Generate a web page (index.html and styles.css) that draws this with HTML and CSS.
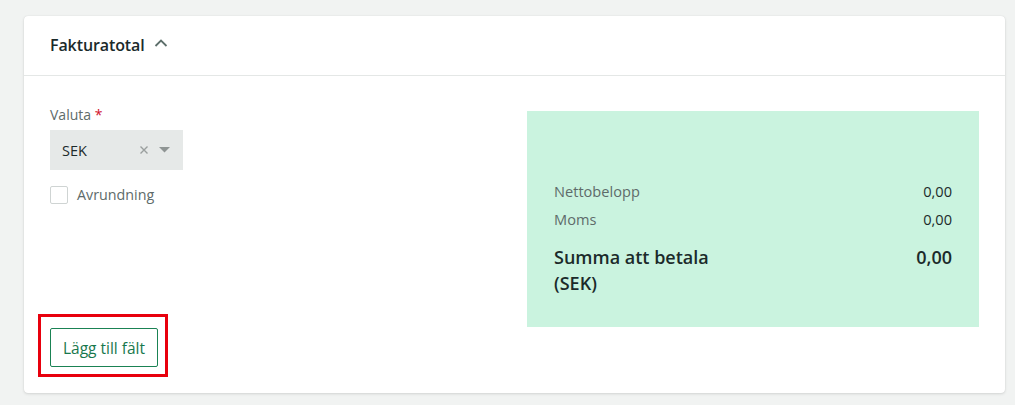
FILE: index.html
```html
<!DOCTYPE html>
<html lang="sv">
<head>
<meta charset="utf-8">
<link rel="stylesheet" href="styles.css">
</head>
<body>
<div class="card">
  <div class="card-header">
    <h2 class="title">Fakturatotal</h2>
    <svg class="chevron" width="14" height="10" viewBox="0 0 14 10"><path d="M1.5 8 L7 2.5 L12.5 8" fill="none" stroke="#5d6f6b" stroke-width="1.8"/></svg>
  </div>
  <div class="card-body">
    <div class="left">
      <div class="label">Valuta <span class="req">*</span></div>
      <div class="select">
        <span class="select-value">SEK</span>
        <span class="select-icons">
          <svg width="10" height="10" viewBox="0 0 10 10"><path d="M1.5 1.5 L8.5 8.5 M8.5 1.5 L1.5 8.5" stroke="#9a9f9e" stroke-width="1.4"/></svg>
          <svg width="11" height="6" viewBox="0 0 11 6"><path d="M0 0 H11 L5.5 5.5 Z" fill="#8f9594"/></svg>
        </span>
      </div>
      <label class="check">
        <span class="box"></span>
        <span class="check-text">Avrundning</span>
      </label>
      <div class="btn-wrap">
        <button class="btn">Lägg till fält</button>
      </div>
    </div>
    <div class="totals">
      <div class="row"><span class="k">Nettobelopp</span><span class="v">0,00</span></div>
      <div class="row"><span class="k">Moms</span><span class="v">0,00</span></div>
      <div class="row total"><span class="k">Summa att betala<br>(SEK)</span><span class="v">0,00</span></div>
    </div>
  </div>
</div>
</body>
</html>
```
FILE: styles.css
```css
* { box-sizing: border-box; }
html, body { margin: 0; height: 100%; }
body {
  background: #f1f3f2;
  font-family: "Open Sans", "Noto Sans", sans-serif;
  padding: 16px 10px 0 24px;
  color: #1d2b2b;
}
.card {
  width: 981px;
  height: 377px;
  background: #fff;
  border-radius: 4px;
  box-shadow: 0 1px 3px rgba(0,0,0,0.12), 0 0 1px rgba(0,0,0,0.12);
  display: flex;
  flex-direction: column;
}
.card-header {
  height: 60px;
  border-bottom: 1px solid #e4e7e6;
  display: flex;
  align-items: center;
  padding: 0 26px 2px 26px;
  gap: 9px;
}
.title {
  margin: 0;
  font-size: 16px;
  font-weight: 600;
  color: #1b2a2a;
  letter-spacing: -0.1px;
}
.chevron { margin-top: -3px; }
.card-body {
  flex: 1;
  display: flex;
  padding: 29px 26px 26px 26px;
}
.left {
  flex: 1;
  display: flex;
  flex-direction: column;
  align-items: flex-start;
}
.label {
  font-size: 14px;
  line-height: 20px;
  color: #5e6b6a;
}
.req { color: #d0102b; }
.select {
  margin-top: 5px;
  width: 133px;
  height: 40px;
  background: #e6e9e8;
  display: flex;
  align-items: center;
  justify-content: space-between;
  padding: 0 13px 0 12px;
}
.select-value { font-size: 14.5px; color: #1d2b2b; }
.select-icons { display: flex; align-items: center; gap: 10px; }
.check {
  margin-top: 16px;
  display: flex;
  align-items: center;
  gap: 9px;
}
.box {
  width: 18px;
  height: 18px;
  border: 1px solid #cfd4d3;
  border-radius: 2px;
  background: #fff;
}
.check-text { font-size: 14.3px; color: #5e6b6a; line-height: 18px; }
.btn-wrap {
  margin-top: auto;
  position: relative;
}
.btn-wrap::after {
  content: "";
  position: absolute;
  top: -14px; bottom: -10px; left: -12.5px; right: -10px;
  border: 3px solid #e8000d;
  pointer-events: none;
}
.btn {
  display: block;
  height: 39px;
  width: 108px;
  background: #fff;
  border: 1px solid #1a8254;
  border-radius: 2px;
  color: #18784d;
  font-family: inherit;
  font-size: 15.5px;
  padding: 0;
}
.totals {
  width: 452px;
  height: 216px;
  margin-top: 6px;
  background: #caf3df;
  padding: 66px 27px 0 27px;
}
.row {
  display: flex;
  justify-content: space-between;
  font-size: 14.6px;
  line-height: 28px;
}
.row .k { color: #5e6b6a; }
.row .v { color: #1d2b2b; }
.row.total {
  margin-top: 11px;
  font-size: 18px;
  line-height: 26px;
  font-weight: 600;
}
.row.total .k, .row.total .v { color: #1b2a2a; }
```
